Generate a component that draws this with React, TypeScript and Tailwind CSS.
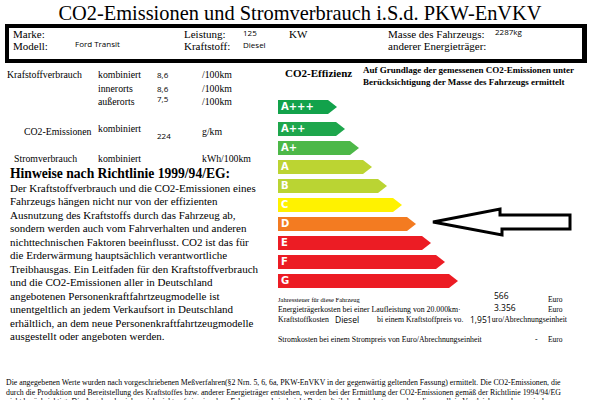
import React from "react";

const bars = [
  { label: "A+++", w: 59, color: "bg-[#12a24b]" },
  { label: "A++", w: 67, color: "bg-[#1ea64c]" },
  { label: "A+", w: 81, color: "bg-[#4db848]" },
  { label: "A", w: 94, color: "bg-[#bcd432]" },
  { label: "B", w: 109, color: "bg-[#bad433]" },
  { label: "C", w: 124, color: "bg-[#fff200]" },
  { label: "D", w: 138, color: "bg-[#f37b21]" },
  { label: "E", w: 153, color: "bg-[#ec1c24]" },
  { label: "F", w: 167, color: "bg-[#ec1c24]" },
  { label: "G", w: 180, color: "bg-[#ec1c24]" },
];

const sans = "font-['Open_Sans',sans-serif]";

export default function App() {
  return (
    <div className="w-[600px] h-[400px] overflow-hidden bg-white text-black font-['Liberation_Serif',serif]">
      <div className="h-[24px] pt-[2px] text-center text-[20.4px] leading-[22px] whitespace-nowrap">
        CO2-Emissionen und Stromverbrauch i.S.d. PKW-EnVKV
      </div>

      <div className="ml-[5px] w-[582px] h-[39px] border-l-[4px] border-t-[4px] border-r-[5px] border-b-[4px] border-black flex items-start pl-[4px] text-[11px] leading-[12px] whitespace-nowrap">
        <div className="w-[62px] shrink-0">
          <div>Marke:</div>
          <div>Modell:</div>
        </div>
        <div className={`w-[109px] shrink-0 self-center text-[8px] ${sans}`}>Ford Transit</div>
        <div className="w-[59px] shrink-0">
          <div>Leistung:</div>
          <div>Kraftstoff:</div>
        </div>
        <div className={`w-[46px] shrink-0 text-[8px] ${sans}`}>
          <div className="-mt-[1px]">125</div>
          <div>Diesel</div>
        </div>
        <div className="w-[99px] shrink-0">KW</div>
        <div className="w-[107px] shrink-0">
          <div>Masse des Fahrzeugs:</div>
          <div>anderer Energieträger:</div>
        </div>
        <div className={`text-[8px] -mt-[2px] ${sans}`}>2287kg</div>
      </div>

      <div className="flex h-[315px]">
        <div className="w-[270px] shrink-0 pt-[5px] text-[9.8px] leading-[13.5px] whitespace-nowrap">
          <div className="pl-[7px]">
            <div className="flex">
              <div className="w-[91px] shrink-0">Krafstoffverbrauch</div>
              <div className="w-[59px] shrink-0">kombiniert</div>
              <div className={`w-[45px] shrink-0 text-[8px] ${sans}`}>8,6</div>
              <div>/100km</div>
            </div>
            <div className="flex">
              <div className="w-[91px] shrink-0"></div>
              <div className="w-[59px] shrink-0">innerorts</div>
              <div className={`w-[45px] shrink-0 text-[8px] ${sans}`}>8,6</div>
              <div>/100km</div>
            </div>
            <div className="flex">
              <div className="w-[91px] shrink-0"></div>
              <div className="w-[59px] shrink-0">außerorts</div>
              <div className={`w-[45px] shrink-0 text-[8px] -mt-[3px] ${sans}`}>7,5</div>
              <div>/100km</div>
            </div>
            <div className="flex items-start mt-[16px]">
              <div className="w-[91px] shrink-0 pl-[17px]">CO2-Emissionen</div>
              <div className="w-[59px] shrink-0 -mt-[3px]">kombiniert</div>
              <div className={`w-[45px] shrink-0 text-[8px] mt-[4px] ${sans}`}>224</div>
              <div>g/km</div>
            </div>
            <div className="flex mt-[10px]">
              <div className="w-[91px] shrink-0 pl-[7px]">Stromverbrauch</div>
              <div className="w-[59px] shrink-0">kombiniert</div>
              <div className="w-[45px] shrink-0"></div>
              <div>kWh/100km</div>
            </div>
          </div>

          <div className="pl-[10px] mt-[0.5px]">
            <div className="text-[13.6px] leading-[16px] font-bold">Hinweise nach Richtlinie 1999/94/EG:</div>
            <div className="text-[11px] leading-[13.45px]">
              <div>Der Kraftstoffverbrauch und die CO2-Emissionen eines</div>
              <div>Fahrzeugs hängen nicht nur von der effizienten</div>
              <div>Ausnutzung des Kraftstoffs durch das Fahrzeug ab,</div>
              <div>sondern werden auch vom Fahrverhalten und anderen</div>
              <div>nichttechnischen Faktoren beeinflusst. CO2 ist das für</div>
              <div>die Erderwärmung hauptsächlich verantwortliche</div>
              <div>Treibhausgas. Ein Leitfaden für den Kraftstoffverbrauch</div>
              <div>und die CO2-Emissionen aller in Deutschland</div>
              <div>angebotenen Personenkraftfahrtzeugmodelle ist</div>
              <div>unentgeltlich an jedem Verkaufsort in Deutschland</div>
              <div>erhältlich, an dem neue Personenkraftfahrtzeugmodelle</div>
              <div>ausgestellt oder angeboten werden.</div>
            </div>
          </div>
        </div>

        <div className="relative flex-1 pt-[1px] whitespace-nowrap">
          <div className="flex items-start">
            <div className="ml-[15px] w-[78px] shrink-0 mt-[2.5px] text-[11px] leading-[13px] font-bold">CO2-Effizienz</div>
            <div className="text-[9px] leading-[12px] font-bold">
              <div>Auf Grundlage der gemessenen CO2-Emissionen unter</div>
              <div>Berücksichtigung der Masse des Fahrzeugs ermittelt</div>
            </div>
          </div>

          <div className="mt-[12px] pl-[8px] flex flex-col gap-[5px]">
            {bars.map((b, i) => (
              <div
                key={b.label}
                className={`h-[14px] ${b.color} ${i === 0 ? "mb-[3px]" : ""} [clip-path:polygon(0_0,calc(100%_-_9px)_0,100%_50%,calc(100%_-_9px)_100%,0_100%)] pl-[3px] text-white font-bold text-[10px] leading-[14px] font-['DejaVu_Sans',sans-serif]`}
                style={{ width: b.w }}
              >
                {b.label}
              </div>
            ))}
          </div>

          <svg
            className="absolute left-[160px] top-[142px]"
            width="143"
            height="34"
            viewBox="0 0 143 34"
          >
            <polygon
              points="3,17 70,4 70,10 140,10 140,24 72,24 72,30"
              fill="white"
              stroke="black"
              strokeWidth="3"
              strokeLinejoin="miter"
            />
          </svg>

          <div className="mt-[7px] pl-[8px]">
            <div className="flex h-[10px] items-center">
              <div className="w-[216px] shrink-0 text-[6.5px] leading-[10px]">Jahressteuer für diese Fahrzeug</div>
              <div className={`w-[54px] shrink-0 text-[8.5px] leading-[10px] -mt-[8px] ${sans}`}>566</div>
              <div className="text-[7.5px] leading-[10px]">Euro</div>
            </div>
            <div className="flex h-[10px] items-center">
              <div className="w-[216px] shrink-0 text-[7.8px] leading-[10px]">Energieträgerkosten bei einer Laufleistung von 20.000km·</div>
              <div className={`w-[54px] shrink-0 text-[8.5px] leading-[10px] -mt-[4px] ${sans}`}>3.356</div>
              <div className="text-[7.5px] leading-[10px]">Euro</div>
            </div>
            <div className="flex h-[10px] items-center text-[7.8px] leading-[10px]">
              <div className="w-[57px] shrink-0 overflow-hidden">Kraftstoffkosten</div>
              <div className={`w-[42px] shrink-0 text-[8.5px] ${sans}`}>Diesel</div>
              <div className="w-[93px] shrink-0">bi einem Kraftstoffpreis vo.</div>
              <div className={`shrink-0 text-[8.5px] ${sans}`}>1,951</div>
              <div>uro/Abrechnungseinheit</div>
            </div>
            <div className="flex h-[10px] items-center mt-[10px] text-[7.8px] leading-[10px]">
              <div className="w-[257px] shrink-0">Stromkosten bei einem Strompreis von Euro/Abrechnungseinheit</div>
              <div className="w-[13px] shrink-0">-</div>
              <div className="text-[7.5px]">Euro</div>
            </div>
          </div>
        </div>
      </div>

      <div className="pl-[6px] text-[7.8px] leading-[9.5px] whitespace-nowrap">
        <div>Die angegebenen Werte wurden nach vorgeschriebenen Meßverfahren(§2 Nrn. 5, 6, 6a, PKW-EnVKV in der gegenwärtig geltenden Fassung) ermittelt. Die CO2-Emissionen, die</div>
        <div>durch die Produktion und Bereitstellung des Kraftstoffes bzw. anderer Energieträger entstehen, werden bei der Ermittlung der CO2-Emissionen gemäß der Richtlinie 1994/94/EG</div>
        <div>nicht berücksichtigt. Die Angaben beziehen sich nicht auf ein einzelnes Fahrzeug und sind nicht Bestandteil des Angebotes, sondern dienen allein Vergleichszwecken zwischen</div>
      </div>
    </div>
  );
}
